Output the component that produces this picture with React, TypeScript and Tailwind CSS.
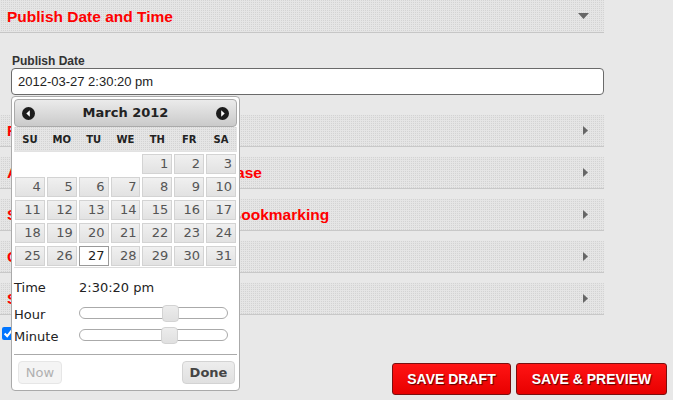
import React from 'react';

const dotted = 'bg-[#e6e6e6] bg-[image:conic-gradient(#d3d3d3_0_25%,#e5e5e5_0)] bg-[length:2px_2px]';

const sections = [
  'Featured Images',
  'Additional Items for Press Release',
  'Syndication Feeds and Social Bookmarking',
  'Categories and Tags',
  'Scheduling Options',
];

const weeks: (number | null)[][] = [
  [null, null, null, null, 1, 2, 3],
  [4, 5, 6, 7, 8, 9, 10],
  [11, 12, 13, 14, 15, 16, 17],
  [18, 19, 20, 21, 22, 23, 24],
  [25, 26, 27, 28, 29, 30, 31],
];

const dayNames = ['SU', 'MO', 'TU', 'WE', 'TH', 'FR', 'SA'];

function NavIcon({ dir }: { dir: 'prev' | 'next' }) {
  return (
    <svg width="13" height="13" viewBox="0 0 13 13">
      <circle cx="6.5" cy="6.5" r="6.5" fill="#1c1c1c" />
      {dir === 'prev' ? (
        <polygon points="7.8,3.3 7.8,9.7 4.3,6.5" fill="#fff" />
      ) : (
        <polygon points="5.2,3.3 5.2,9.7 8.7,6.5" fill="#fff" />
      )}
    </svg>
  );
}

function Slider({ pos }: { pos: number }) {
  return (
    <div className="relative h-[12px] w-[149px] rounded-full border border-[#aaa] bg-white">
      <div
        className="absolute top-[-3px] h-[17px] w-[17px] rounded-[4px] border border-[#d3d3d3] bg-[linear-gradient(#ececec,#e0e0e0)]"
        style={{ left: pos }}
      />
    </div>
  );
}

function DatePicker() {
  return (
    <div className="absolute left-[11px] top-[96px] w-[229px] rounded-[4px] border border-[#aaa] bg-white p-[2px] font-['DejaVu_Sans',sans-serif]">
      {/* header */}
      <div className="flex h-[28px] items-center justify-between rounded-[4px] border border-[#aaa] bg-[linear-gradient(#ebebeb,#cacaca)] px-[7px]">
        <NavIcon dir="prev" />
        <span className="text-[13px] font-bold text-[#222]">March 2012</span>
        <NavIcon dir="next" />
      </div>

      {/* weekdays */}
      <div className={`grid h-[25px] grid-cols-7 items-center border-b border-[#e2e2e2] ${dotted}`}>
        {dayNames.map(d => (
          <span key={d} className="text-center text-[10px] font-bold text-[#222]">{d}</span>
        ))}
      </div>

      {/* days */}
      <div className="grid grid-cols-7 gap-x-[2px] gap-y-[3px] px-[1px] pt-[2px]">
        {weeks.flat().map((d, i) =>
          d === null ? (
            <div key={i} className="h-[20px]" />
          ) : (
            <div
              key={i}
              className={`h-[20px] border pr-[3px] text-right text-[13px] leading-[18px] ${
                d === 27
                  ? 'border-[#999] bg-white text-[#212121]'
                  : 'border-[#d3d3d3] bg-[linear-gradient(#f0f0f0,#e2e2e2)] text-[#555]'
              }`}
            >
              {d}
            </div>
          )
        )}
      </div>
      <div className="mt-[1px] h-px bg-[#dcdcdc]" />

      {/* time */}
      <div className="text-[13px] text-[#222]">
        <div className="mt-[12px] flex h-[16px] items-center">
          <span className="w-[65px]">Time</span>
          <span>2:30:20 pm</span>
        </div>
        <div className="mt-[6px] flex h-[22px] items-center">
          <span className="w-[65px] pt-[4px]">Hour</span>
          <Slider pos={82} />
        </div>
        <div className="flex h-[22px] items-center">
          <span className="w-[65px] pt-[4px]">Minute</span>
          <Slider pos={81} />
        </div>
      </div>

      <div className="mt-[8px] h-px bg-[#aaa]" />

      <div className="flex items-center justify-between px-[4px] pb-[4px] pt-[6px] pr-[2px]">
        <button className="h-[23px] w-[44px] rounded-[4px] border border-[#e6e6e6] bg-[#f4f4f4] text-[13px] text-[#b0b0b0]">
          Now
        </button>
        <button className="h-[23px] w-[53px] rounded-[4px] border border-[#d3d3d3] bg-[linear-gradient(#ededed,#e0e0e0)] text-[13px] font-bold text-[#444]">
          Done
        </button>
      </div>
    </div>
  );
}

export default function App() {
  return (
    <div className="relative h-[400px] w-[673px] overflow-hidden bg-[#e8e8e8] font-['Liberation_Sans',Arial,sans-serif]">
      <div className="w-[604px]">
        {/* Section title */}
        <div className={`flex h-[33px] items-center justify-between border-b border-[#c6c6c6] pl-[7px] pr-[15px] pt-[2px] ${dotted}`}>
          <h2 className="text-[15.5px] font-bold text-[#ff0000]">Publish Date and Time</h2>
          <svg width="11" height="6" viewBox="0 0 11 6" className="mb-[2px]">
            <polygon points="0,0 11,0 5.5,6" fill="#666" />
          </svg>
        </div>

        <label className="mt-[21px] block pl-[12px] text-[12px] font-bold leading-[14px] text-[#333]">
          Publish Date
        </label>
        <input
          readOnly
          value="2012-03-27 2:30:20 pm"
          className="ml-[11px] block h-[27px] w-[593px] rounded-[4px] border border-[#6a6a6a] bg-white px-[6px] text-[13px] text-[#222] outline-none"
        />

        {/* collapsed sections */}
        <div className="mt-[20px] flex flex-col gap-[10px]">
          {sections.map(s => (
            <div
              key={s}
              className={`flex h-[32px] items-center justify-between border-b border-[#c8c8c8] pl-[7px] pr-[16px] ${dotted}`}
            >
              <span className="text-[15.5px] font-bold text-[#ff0000]">{s}</span>
              <svg width="5" height="9" viewBox="0 0 5 9">
                <polygon points="0,0 5,4.5 0,9" fill="#666" />
              </svg>
            </div>
          ))}
        </div>

        <div className="mt-[10px] flex h-[16px] items-center gap-[4px] text-[13px] text-[#333]">
          <input type="checkbox" defaultChecked className="ml-[2px] h-[13px] w-[13px]" />
          <span>Allow comments</span>
        </div>
      </div>

      {/* actions */}
      <div className="mt-[22px] flex justify-end gap-[5px] pr-[6px]">
        <button className="h-[32px] w-[119px] rounded-[3px] border border-[#7a1010] bg-[linear-gradient(#ff1414,#e80000)] text-[14px] font-bold text-white [text-shadow:1px_1px_1px_#5a0000]">
          SAVE DRAFT
        </button>
        <button className="h-[32px] w-[151px] rounded-[3px] border border-[#7a1010] bg-[linear-gradient(#ff1414,#e80000)] text-[14px] font-bold text-white [text-shadow:1px_1px_1px_#5a0000]">
          SAVE &amp; PREVIEW
        </button>
      </div>

      <DatePicker />
    </div>
  );
}
